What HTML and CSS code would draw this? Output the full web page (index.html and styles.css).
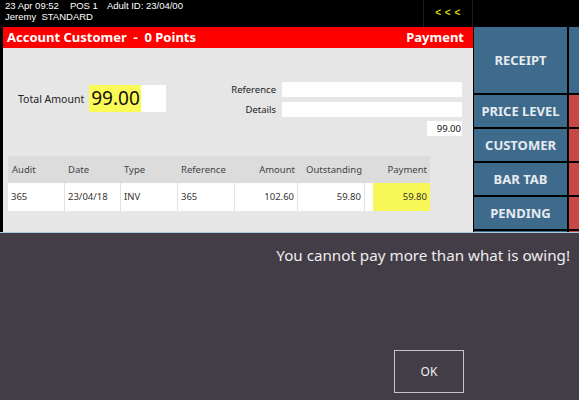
FILE: index.html
```html
<!DOCTYPE html>
<html>
<head>
<meta charset="utf-8">
<link rel="stylesheet" href="styles.css">
</head>
<body>
<div class="screen">
  <header class="topbar">
    <div class="info">
      <div class="line"><span>23 Apr 09:52</span><span class="pos">POS 1</span><span class="adult">Adult ID: 23/04/00</span></div>
      <div class="line">Jeremy&nbsp;&nbsp;STANDARD</div>
    </div>
    <div class="arrows">&lt; &lt; &lt;</div>
    <div class="topfill"></div>
  </header>
  <div class="main">
    <section class="panel">
      <div class="titlebar"><span class="title">Account Customer  -  0 Points</span><span>Payment</span></div>
      <div class="body">
        <div class="top">
          <div class="total">
            <span class="lbl">Total Amount</span>
            <div class="amountbox"><span class="amount">99.00</span></div>
          </div>
          <div class="refs">
            <span class="rlbl">Reference</span><div class="field"></div>
            <span class="rlbl">Details</span><div class="field"></div>
            <div class="small">99.00</div>
          </div>
        </div>
        <div class="table">
          <div class="row head">
            <div class="c">Audit</div>
            <div class="c">Date</div>
            <div class="c">Type</div>
            <div class="c">Reference</div>
            <div class="c r">Amount</div>
            <div class="c r">Outstanding</div>
            <div class="c r">Payment</div>
          </div>
          <div class="row data">
            <div class="c">365</div>
            <div class="c">23/04/18</div>
            <div class="c">INV</div>
            <div class="c">365</div>
            <div class="c r">102.60</div>
            <div class="c r">59.80</div>
            <div class="c pay"><div class="hl">59.80</div></div>
          </div>
        </div>
      </div>
    </section>
    <nav class="buttons">
      <div class="btn big">RECEIPT</div>
      <div class="btn">PRICE LEVEL</div>
      <div class="btn">CUSTOMER</div>
      <div class="btn">BAR TAB</div>
      <div class="btn">PENDING</div>
      <div class="btn"></div>
    </nav>
    <div class="side">
      <div class="sb blue big"></div>
      <div class="sb"></div>
      <div class="sb"></div>
      <div class="sb"></div>
      <div class="sb"></div>
      <div class="sb"></div>
    </div>
  </div>
  <div class="dialog">
    <div class="msg">You cannot pay more than what is owing!</div>
    <div class="ok">OK</div>
  </div>
</div>
</body>
</html>
```

FILE: styles.css
```css
* { box-sizing: border-box; }
html, body { margin: 0; padding: 0; }
body {
  width: 579px;
  height: 400px;
  overflow: hidden;
  background: #000;
  font-family: "Noto Sans", "DejaVu Sans", sans-serif;
}
.screen {
  position: relative;
  width: 579px;
  height: 400px;
  overflow: hidden;
  background: #000;
}
.topbar {
  display: flex;
  height: 27px;
  background: #000;
  color: #fff;
}
.info {
  width: 423px;
  padding: 1px 0 0 5px;
  font-family: "Liberation Sans", Arial, sans-serif;
  font-size: 9.5px;
  line-height: 10.7px;
}
.line span { margin-right: 11px; }
.line .pos { margin-right: 9px; }
.arrows {
  width: 50px;
  border-left: 1px solid #1c1c1c;
  border-right: 1px solid #1c1c1c;
  color: #d4d400;
  font-family: "Liberation Sans", Arial, sans-serif;
  font-size: 10px;
  font-weight: bold;
  letter-spacing: 0.5px;
  text-align: center;
  padding-top: 7px;
  line-height: 12px;
}
.topfill { flex: 1; }

.main {
  display: flex;
  height: 373px;
  padding-left: 3px;
}
.panel {
  width: 470px;
  display: flex;
  flex-direction: column;
  background: #e6e6e6;
}
.titlebar {
  height: 21px;
  background: #ff0000;
  color: #fff;
  font-weight: bold;
  font-size: 13px;
  line-height: 20px;
  display: flex;
  justify-content: space-between;
  padding: 0 9px 0 4px;
}
.title { white-space: pre; }
.body {
  flex: 1;
  padding-top: 34px;
}
.top {
  display: flex;
  justify-content: space-between;
}
.total {
  display: flex;
  align-items: center;
  margin: 3px 0 0 15px;
  height: 27px;
}
.lbl {
  font-size: 10.5px;
  color: #222;
  margin-right: 5px;
}
.amountbox {
  width: 77px;
  height: 27px;
  background: #fff;
}
.amount {
  display: inline-block;
  height: 27px;
  width: 52px;
  background: #fbfb58;
  font-size: 19px;
  line-height: 27px;
  padding-left: 2px;
  color: #111;
}
.refs {
  display: grid;
  grid-template-columns: auto 180px;
  column-gap: 6px;
  row-gap: 5px;
  margin-right: 11px;
  align-items: center;
}
.rlbl {
  font-size: 9.5px;
  color: #222;
  text-align: right;
}
.field {
  height: 15px;
  background: #fff;
}
.small {
  grid-column: 2;
  justify-self: end;
  width: 35px;
  height: 15px;
  background: #fff;
  font-size: 9.5px;
  line-height: 15px;
  text-align: right;
  padding-right: 1px;
  color: #111;
  margin-top: -1px;
}
.table {
  margin: 20px 0 0 5px;
  width: 422px;
}
.row {
  display: grid;
  grid-template-columns: 57px 56px 57px 57px 63px 67px 65px;
}
.head {
  height: 27px;
  background: #dcdcdc;
  color: #444;
}
.data {
  height: 28px;
  color: #333;
}
.c {
  font-size: 9.5px;
  padding: 0 3px;
  line-height: 27px;
  white-space: nowrap;
}
.head .c:first-child { padding-left: 4px; }
.r { text-align: right; }
.data .c {
  background: #fff;
  border-right: 1px solid #e2e2e2;
  line-height: 28px;
}
.data .c:last-child { border-right: 0; }
.data .pay {
  padding: 0 0 0 8px;
}
.hl {
  height: 28px;
  background: #f7f757;
  text-align: right;
  padding-right: 3px;
}

.buttons {
  width: 93px;
  margin-left: 1px;
  display: flex;
  flex-direction: column;
  gap: 2px;
}
.btn {
  height: 32px;
  background: #3e6a8c;
  color: #e6ebef;
  font-weight: bold;
  font-size: 13px;
  display: flex;
  align-items: center;
  justify-content: center;
  white-space: nowrap;
}
.btn.big { height: 66px; }
.side {
  width: 10px;
  margin-left: 2px;
  display: flex;
  flex-direction: column;
  gap: 2px;
}
.sb { height: 32px; background: #c84848; }
.sb.big { height: 66px; }
.sb.blue { background: #3e6a8c; }

.dialog {
  position: absolute;
  left: 0;
  top: 232px;
  width: 579px;
  height: 168px;
  background: #433d47;
  border-top: 1px solid #a9c8e3;
  display: flex;
  flex-direction: column;
  align-items: flex-end;
}
.msg {
  margin: 12px 9px 0 0;
  color: #eeeeee;
  font-size: 15.2px;
  line-height: 20px;
}
.ok {
  margin: auto 115px 7px 0;
  width: 70px;
  height: 43px;
  border: 1px solid #c4c4c4;
  color: #f0f0f0;
  font-size: 12px;
  display: flex;
  align-items: center;
  justify-content: center;
}
```
